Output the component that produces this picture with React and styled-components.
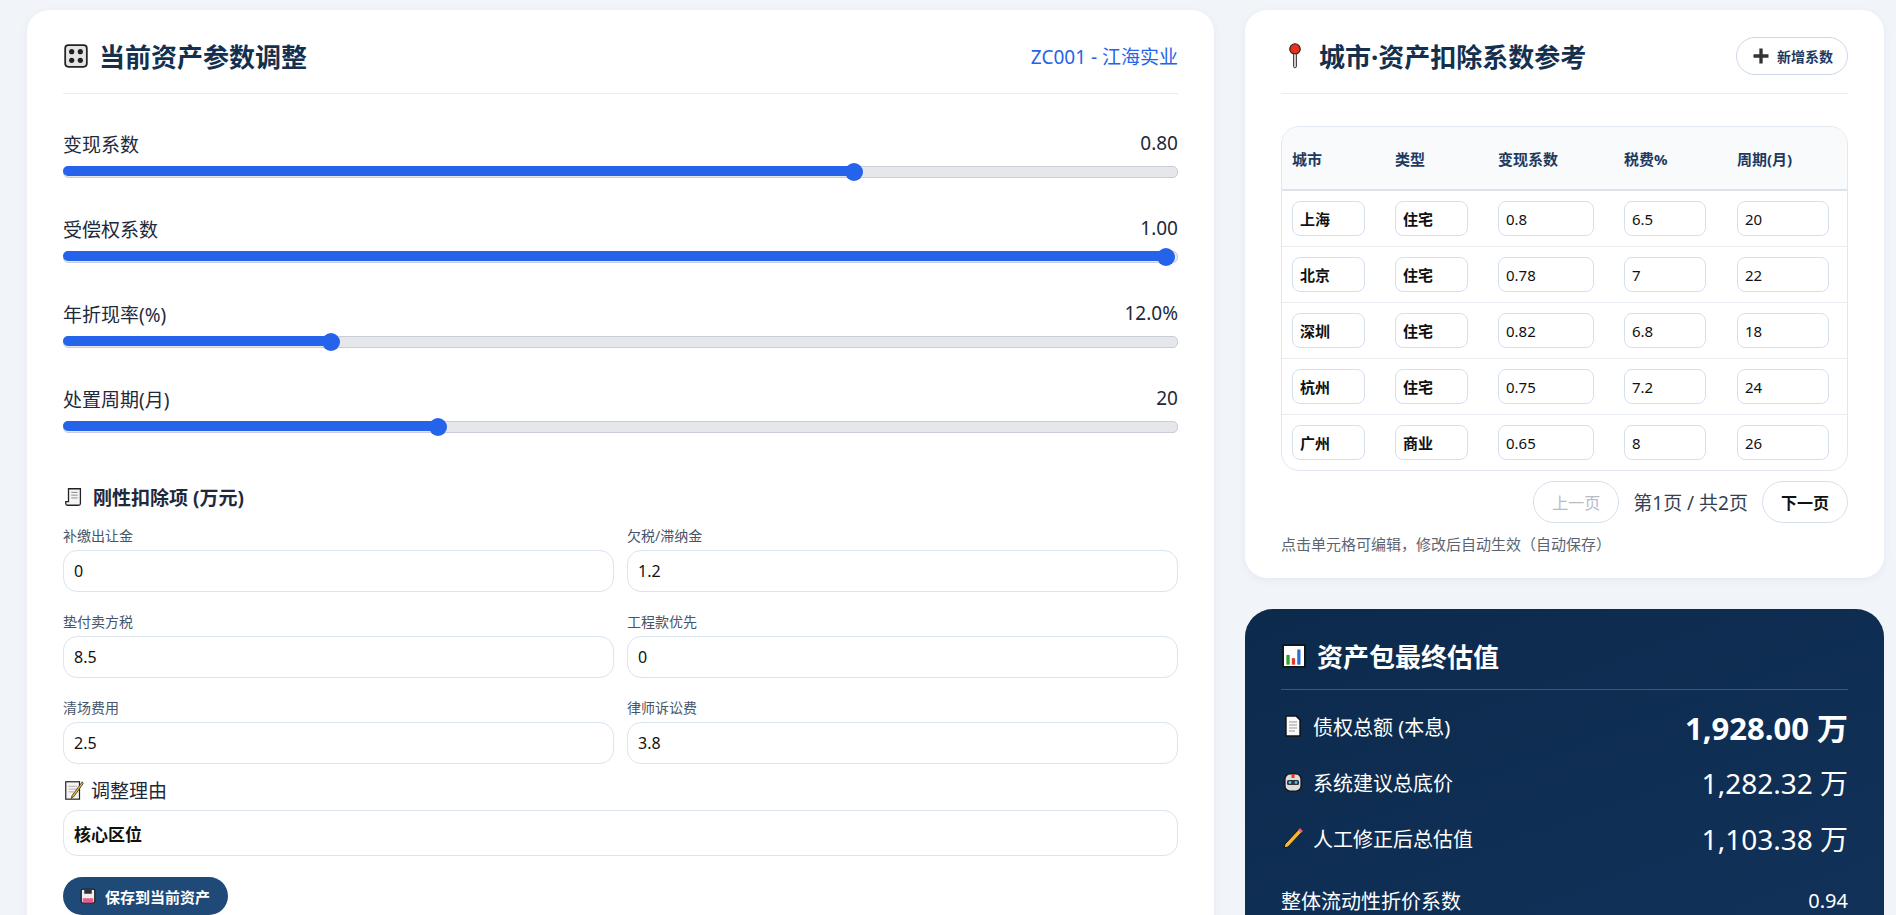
import React from "react";
import styled, { createGlobalStyle } from "styled-components";

const Global = createGlobalStyle`
  html, body { margin: 0; padding: 0; background: #f1f4f9; }
  body { font-family: "Noto Sans", "Noto Sans CJK SC", sans-serif; color: #1e293b; }
  input { font-family: inherit; }
`;

const Page = styled.div`
  display: grid;
  grid-template-columns: 1187px 639px;
  gap: 31px;
  padding: 10px 13px 0 27px;
  height: 915px;
  overflow: hidden;
  box-sizing: border-box;
`;

const Card = styled.div`
  background: #fff;
  border-radius: 22px;
  padding: 8px 36px 24px;
  box-shadow: 0 2px 10px rgba(15, 40, 80, 0.05);
`;

const Column = styled.div`
  display: flex;
  flex-direction: column;
  gap: 31px;
`;

const Header = styled.div`
  display: flex;
  align-items: center;
  justify-content: space-between;
  height: 75px;
  border-bottom: 1px solid #e8edf3;
`;

const Title = styled.h2`
  margin: 0;
  display: flex;
  align-items: center;
  gap: 10px;
  font-size: 26px;
  font-weight: 700;
  color: #13304f;
`;

const AssetTag = styled.span`
  color: #2563eb;
  font-size: 19px;
`;

const Sliders = styled.div`
  padding-top: 36px;
  display: flex;
  flex-direction: column;
  gap: 37px;
`;

const SliderRow = styled.div`
  display: flex;
  flex-direction: column;
  gap: 8px;
`;

const SliderHead = styled.div`
  display: flex;
  justify-content: space-between;
  font-size: 19px;
  color: #1e293b;
`;

const Track = styled.div`
  position: relative;
  height: 10px;
  border-radius: 5px;
  background: #e5e7eb;
  border: 1px solid #c9ced6;
`;

const Fill = styled.div`
  height: 100%;
  border-radius: 5px;
  background: #2563eb;
  margin: -1px;
`;

const Thumb = styled.div`
  position: absolute;
  top: 50%;
  width: 18px;
  height: 18px;
  border-radius: 50%;
  background: #2563eb;
  transform: translate(-50%, -50%);
`;

const SectionTitle = styled.h3`
  margin: 50px 0 14px;
  display: flex;
  align-items: center;
  gap: 8px;
  font-size: 19px;
  font-weight: 700;
  color: #1e293b;
`;

const FieldGrid = styled.div`
  display: grid;
  grid-template-columns: 1fr 1fr;
  column-gap: 13px;
  row-gap: 19px;
`;

const Field = styled.label`
  display: flex;
  flex-direction: column;
  gap: 5px;
  font-size: 14px;
  color: #475569;
`;

const TextInput = styled.input`
  height: ${(p) => (p.$tall ? 46 : 42)}px;
  border: 1px solid #dbe4ef;
  border-radius: 14px;
  padding: 0 10px;
  font-size: ${(p) => (p.$tall ? 17 : 16)}px;
  color: #111;
  box-sizing: border-box;
  background: #fff;
  font-weight: ${(p) => (p.$bold ? 600 : 400)};
`;

const ReasonLabel = styled.div`
  display: flex;
  align-items: center;
  gap: 6px;
  margin: 12px 0 6px;
  font-size: 19px;
`;

const SaveButton = styled.button`
  margin-top: 21px;
  display: inline-flex;
  align-items: center;
  gap: 8px;
  height: 38px;
  padding: 0 18px 0 16px;
  border: none;
  border-radius: 19px;
  background: #1f4a78;
  color: #fff;
  font-size: 15px;
  font-weight: 700;
  font-family: inherit;
`;

const AddButton = styled.button`
  display: flex;
  align-items: center;
  gap: 6px;
  height: 38px;
  padding: 0 14px;
  border: 1px solid #cbd8ea;
  border-radius: 19px;
  background: #fff;
  color: #1e3a5f;
  font-size: 14px;
  font-weight: 700;
  font-family: inherit;
`;

const TableBox = styled.div`
  margin-top: 32px;
  border: 1px solid #e2e8f0;
  border-radius: 18px;
  overflow: hidden;
`;

const cols = "103px 103px 126px 113px 1fr";

const HeadRow = styled.div`
  display: grid;
  grid-template-columns: ${cols};
  align-items: center;
  height: 62px;
  padding-left: 10px;
  background: #f8fafc;
  border-bottom: 2px solid #dde3ea;
  font-size: 15px;
  font-weight: 700;
  color: #1e3a5f;
`;

const BodyRow = styled.div`
  display: grid;
  grid-template-columns: ${cols};
  align-items: center;
  height: 55px;
  padding-left: 10px;
  border-bottom: ${(p) => (p.$last ? "none" : "1px solid #e8edf3")};
`;

const Cell = styled.input`
  width: ${(p) => p.$w}px;
  height: 35px;
  box-sizing: border-box;
  border: 1px solid #d6e0ec;
  border-radius: 8px;
  padding: 0 7px;
  font-size: 15px;
  color: #111;
  font-weight: ${(p) => (p.$bold ? 600 : 400)};
`;

const Pager = styled.div`
  display: flex;
  justify-content: flex-end;
  align-items: center;
  gap: 14px;
  margin-top: 10px;
  font-size: 19px;
  color: #334155;
`;

const PageButton = styled.button`
  height: 42px;
  padding: 0 18px;
  border: 1px solid #d6e0ec;
  border-radius: 21px;
  background: #fff;
  font-size: 16px;
  font-family: inherit;
  font-weight: ${(p) => (p.disabled ? 400 : 700)};
  color: ${(p) => (p.disabled ? "#b5bcc6" : "#111")};
`;

const Hint = styled.p`
  margin: 10px 0 0;
  font-size: 15px;
  color: #5b6472;
`;

const DarkCard = styled.div`
  background: linear-gradient(160deg, #0c2a4c, #13335c);
  border-radius: 28px;
  padding: 14px 36px;
  color: #fff;
  height: 400px;
`;

const DarkHeader = styled.div`
  display: flex;
  align-items: center;
  gap: 10px;
  height: 66px;
  border-bottom: 1px solid #36597f;
  font-size: 26px;
  font-weight: 700;
`;

const ValueRow = styled.div`
  display: flex;
  justify-content: space-between;
  align-items: center;
  height: 56px;
  margin-top: ${(p) => p.$mt || 0}px;
`;

const ValueLabel = styled.div`
  display: flex;
  align-items: center;
  gap: 8px;
  font-size: 20px;
`;

const Value = styled.div`
  font-size: ${(p) => (p.$small ? 20 : p.$big ? 31 : 28)}px;
  font-weight: ${(p) => (p.$big ? 700 : 400)};
`;

const Icon = ({ children, size = 26 }) => (
  <svg width={size} height={size} viewBox="0 0 24 24">
    {children}
  </svg>
);

const KnobsIcon = () => (
  <Icon>
    <rect x="2" y="2" width="20" height="20" rx="3" fill="#e5e5e5" stroke="#222" strokeWidth="1.6" />
    {[[8, 8], [16, 8], [8, 16], [16, 16]].map(([x, y]) => (
      <circle key={x + "-" + y} cx={x} cy={y} r="2.4" fill="#222" />
    ))}
  </Icon>
);

const PinIcon = () => (
  <Icon size={28}>
    <circle cx="12" cy="6" r="4.5" fill="#e8321b" stroke="#222" strokeWidth="1" />
    <rect x="10.8" y="10" width="2.4" height="12" rx="1" fill="#ddd" stroke="#222" strokeWidth="0.8" />
  </Icon>
);

const ScrollIcon = () => (
  <Icon size={22}>
    <path d="M6 3h13v16a2 2 0 0 1-2 2H5a2 2 0 0 1-2-2v-2h3z" fill="#f4f4f4" stroke="#222" strokeWidth="1.4" />
    <path d="M9 7h7M9 10h7M9 13h7" stroke="#888" strokeWidth="1" />
  </Icon>
);

const MemoIcon = () => (
  <Icon size={22}>
    <rect x="3" y="3" width="15" height="19" fill="#f4f4f4" stroke="#222" strokeWidth="1.3" />
    <path d="M6 8h9M6 11h9M6 14h6" stroke="#aaa" strokeWidth="1" />
    <path d="M21 3 10 18l-1 3 3-2L22 5z" fill="#f5b932" stroke="#222" strokeWidth="0.8" />
  </Icon>
);

const DiskIcon = () => (
  <Icon size={18}>
    <rect x="3" y="3" width="18" height="18" rx="2" fill="#eee" stroke="#111" strokeWidth="1.4" />
    <rect x="7" y="3" width="10" height="6" fill="#333" />
    <rect x="5" y="15" width="14" height="6" fill="#e85b8a" />
  </Icon>
);

const PlusIcon = () => (
  <Icon size={20}>
    <path d="M12 3v18M3 12h18" stroke="#333" strokeWidth="4" />
  </Icon>
);

const ChartIcon = () => (
  <Icon>
    <rect x="2" y="2" width="20" height="20" fill="#fff" stroke="#111" strokeWidth="1.5" />
    <rect x="5" y="11" width="3" height="9" fill="#2ca02c" />
    <rect x="10" y="14" width="3" height="6" fill="#e23b2e" />
    <rect x="15" y="6" width="3" height="14" fill="#2b6fd6" />
  </Icon>
);

const DocIcon = () => (
  <Icon size={24}>
    <path d="M5 2h10l4 4v16H5z" fill="#fafafa" stroke="#111" strokeWidth="1.4" />
    <path d="M8 8h8M8 11h8M8 14h8M8 17h6" stroke="#999" strokeWidth="1" />
  </Icon>
);

const RobotIcon = () => (
  <Icon size={24}>
    <rect x="4" y="4" width="16" height="17" rx="5" fill="#ddd" stroke="#111" strokeWidth="1.2" />
    <rect x="10.5" y="4" width="3" height="4" fill="#e23b2e" />
    <rect x="6" y="10" width="12" height="5" rx="1.5" fill="#333" />
    <circle cx="9" cy="12.5" r="1.4" fill="#4cc3ff" />
    <circle cx="15" cy="12.5" r="1.4" fill="#4cc3ff" />
  </Icon>
);

const PencilIcon = () => (
  <Icon size={24}>
    <path d="M19 2 22 5 7 21l-4 1 1-4z" fill="#f5b932" stroke="#111" strokeWidth="1" />
    <path d="M19 2l3 3-2 2-3-3z" fill="#e85b8a" />
  </Icon>
);

const sliders = [
  { label: "变现系数", value: "0.80", pct: 71 },
  { label: "受偿权系数", value: "1.00", pct: 99 },
  { label: "年折现率(%)", value: "12.0%", pct: 24 },
  { label: "处置周期(月)", value: "20", pct: 33.6 },
];

const fields = [
  ["补缴出让金", "0"],
  ["欠税/滞纳金", "1.2"],
  ["垫付卖方税", "8.5"],
  ["工程款优先", "0"],
  ["清场费用", "2.5"],
  ["律师诉讼费", "3.8"],
];

const rows = [
  ["上海", "住宅", "0.8", "6.5", "20"],
  ["北京", "住宅", "0.78", "7", "22"],
  ["深圳", "住宅", "0.82", "6.8", "18"],
  ["杭州", "住宅", "0.75", "7.2", "24"],
  ["广州", "商业", "0.65", "8", "26"],
];
const widths = [73, 73, 96, 82, 92];

export default function App() {
  return (
    <>
      <Global />
      <Page>
        <Card>
          <Header>
            <Title>
              <KnobsIcon />
              当前资产参数调整
            </Title>
            <AssetTag>ZC001 - 江海实业</AssetTag>
          </Header>
          <Sliders>
            {sliders.map((s) => (
              <SliderRow key={s.label}>
                <SliderHead>
                  <span>{s.label}</span>
                  <span>{s.value}</span>
                </SliderHead>
                <Track>
                  <Fill style={{ width: `${s.pct}%` }} />
                  <Thumb style={{ left: `${s.pct}%` }} />
                </Track>
              </SliderRow>
            ))}
          </Sliders>
          <SectionTitle>
            <ScrollIcon />
            刚性扣除项 (万元)
          </SectionTitle>
          <FieldGrid>
            {fields.map(([label, val]) => (
              <Field key={label}>
                {label}
                <TextInput defaultValue={val} />
              </Field>
            ))}
          </FieldGrid>
          <ReasonLabel>
            <MemoIcon />
            调整理由
          </ReasonLabel>
          <TextInput $tall $bold defaultValue="核心区位" style={{ width: "100%" }} />
          <SaveButton>
            <DiskIcon />
            保存到当前资产
          </SaveButton>
        </Card>

        <Column>
          <Card>
            <Header>
              <Title>
                <PinIcon />
                城市·资产扣除系数参考
              </Title>
              <AddButton>
                <PlusIcon />
                新增系数
              </AddButton>
            </Header>
            <TableBox>
              <HeadRow>
                <span>城市</span>
                <span>类型</span>
                <span>变现系数</span>
                <span>税费%</span>
                <span>周期(月)</span>
              </HeadRow>
              {rows.map((r, i) => (
                <BodyRow key={r[0]} $last={i === rows.length - 1}>
                  {r.map((v, j) => (
                    <Cell key={j} $w={widths[j]} $bold={j < 2} defaultValue={v} />
                  ))}
                </BodyRow>
              ))}
            </TableBox>
            <Pager>
              <PageButton disabled>上一页</PageButton>
              <span>第1页 / 共2页</span>
              <PageButton>下一页</PageButton>
            </Pager>
            <Hint>点击单元格可编辑，修改后自动生效（自动保存）</Hint>
          </Card>

          <DarkCard>
            <DarkHeader>
              <ChartIcon />
              资产包最终估值
            </DarkHeader>
            <ValueRow $mt={8}>
              <ValueLabel>
                <DocIcon />
                债权总额 (本息)
              </ValueLabel>
              <Value $big>1,928.00 万</Value>
            </ValueRow>
            <ValueRow>
              <ValueLabel>
                <RobotIcon />
                系统建议总底价
              </ValueLabel>
              <Value>1,282.32 万</Value>
            </ValueRow>
            <ValueRow>
              <ValueLabel>
                <PencilIcon />
                人工修正后总估值
              </ValueLabel>
              <Value>1,103.38 万</Value>
            </ValueRow>
            <ValueRow $mt={6}>
              <ValueLabel>整体流动性折价系数</ValueLabel>
              <Value $small>0.94</Value>
            </ValueRow>
          </DarkCard>
        </Column>
      </Page>
    </>
  );
}
